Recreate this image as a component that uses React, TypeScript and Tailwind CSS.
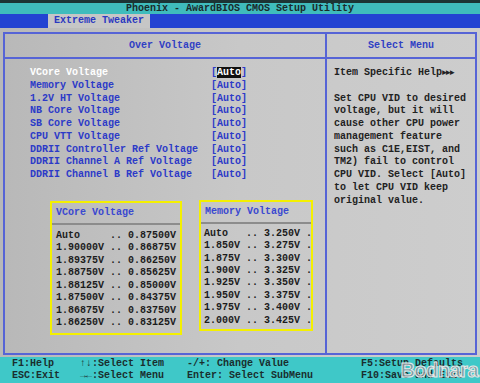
import React from "react";

const mono = { fontFamily: '"Liberation Mono", "DejaVu Sans Mono", monospace' };

const items = [
  "VCore Voltage",
  "Memory Voltage",
  "1.2V HT Voltage",
  "NB Core Voltage",
  "SB Core Voltage",
  "CPU VTT Voltage",
  "DDRII Controller Ref Voltage",
  "DDRII Channel A Ref Voltage",
  "DDRII Channel B Ref Voltage",
];

const help = [
  "Set CPU VID to desired",
  "voltage, but it will",
  "cause other CPU power",
  "management feature",
  "such as C1E,EIST, and",
  "TM2) fail to control",
  "CPU VID. Select [Auto]",
  "to let CPU VID keep",
  "original value.",
];

const vcore = [
  "Auto     .. 0.87500V",
  "1.90000V .. 0.86875V",
  "1.89375V .. 0.86250V",
  "1.88750V .. 0.85625V",
  "1.88125V .. 0.85000V",
  "1.87500V .. 0.84375V",
  "1.86875V .. 0.83750V",
  "1.86250V .. 0.83125V",
];

const mem = [
  "Auto   .. 3.250V .",
  "1.850V .. 3.275V .",
  "1.875V .. 3.300V .",
  "1.900V .. 3.325V .",
  "1.925V .. 3.350V .",
  "1.950V .. 3.375V .",
  "1.975V .. 3.400V .",
  "2.000V .. 3.425V .",
];

export default function App() {
  return (
    <div
      className="relative w-[480px] h-[383px] overflow-hidden flex flex-col text-[10px] font-bold"
      style={mono}
    >
      <div className="h-[3px] bg-[#1c3434]" />
      <div className="h-[11px] bg-[#3fbcbc] flex items-center justify-center text-[#1a2a2a] leading-[11px] whitespace-pre">
        Phoenix - AwardBIOS CMOS Setup Utility
      </div>
      <div className="h-[14px] bg-[#2343d2] flex items-end">
        <div className="ml-[48px] w-[102px] h-[14px] bg-[#c6c6c6] text-[#2a38c0] flex items-center justify-center leading-[14px]">
          Extreme Tweaker
        </div>
      </div>
      <div className="flex-1 bg-gradient-to-r from-[#b8b8b8] via-[#c8c8c8] to-[#cdcdcd] pt-[4px] px-[3px] pb-[2px] flex">
        <div className="flex-1 border-2 border-[#5664d6] flex">
          <div className="w-[322px] border-r-2 border-[#5664d6] flex flex-col">
            <div className="h-[25px] border-b-2 border-[#5664d6] flex items-center justify-center text-[#3040c4]">
              Over Voltage
            </div>
            <div className="pt-[8px] pl-[25px] flex flex-col leading-[12.75px]">
              {items.map((it, i) => (
                <div key={it} className="flex whitespace-pre">
                  <span className={`w-[181px] ${i === 0 ? "text-white" : "text-[#2c3ac8]"}`}>{it}</span>
                  <span className="text-[#2c3ac8]">
                    [
                    {i === 0 ? (
                      <span className="bg-[#101010] text-white">Auto</span>
                    ) : (
                      "Auto"
                    )}
                    ]
                  </span>
                </div>
              ))}
            </div>
            <div className="mt-[19px] flex items-start">
              <div className="ml-[45px] w-[132px] h-[134px] border-2 border-[#f4f000] flex flex-col">
                <div className="h-[22px] border-b-2 border-[#8c8c8c] pl-[4px] flex items-center text-[#3a48d0]">
                  VCore Voltage
                </div>
                <div className="pt-[5px] pl-[4px] flex flex-col leading-[12.5px] text-[#1c1c1c] whitespace-pre">
                  {vcore.map((r) => (
                    <div key={r}>{r}</div>
                  ))}
                </div>
              </div>
              <div className="ml-[17px] -mt-[1px] w-[114px] h-[131px] border-2 border-[#f4f000] flex flex-col overflow-hidden">
                <div className="h-[22px] border-b-2 border-[#8c8c8c] pl-[4px] flex items-center text-[#3a48d0]">
                  Memory Voltage
                </div>
                <div className="pt-[4px] pl-[3px] flex flex-col leading-[12.4px] text-[#1c1c1c] whitespace-pre">
                  {mem.map((r) => (
                    <div key={r}>{r}</div>
                  ))}
                </div>
              </div>
            </div>
          </div>
          <div className="flex-1 flex flex-col">
            <div className="h-[25px] border-b-2 border-[#5664d6] flex items-center justify-center text-[#3040c4]">
              Select Menu
            </div>
            <div className="pt-[8px] pl-[7px] flex flex-col leading-[12.75px] text-[#222222] whitespace-pre">
              <div>
                Item Specific Help<span className="text-[8px] tracking-[-1px]">►►►</span>
              </div>
              <div className="h-[12.75px]" />
              {help.map((h) => (
                <div key={h}>{h}</div>
              ))}
            </div>
          </div>
        </div>
      </div>
      <div className="h-[26px] bg-[#3fc8c8] text-[#1a2e2e] flex flex-col justify-center leading-[12.5px] whitespace-pre">
        <div className="flex">
          <span className="ml-[12px] w-[68px]">F1:Help</span>
          <span className="w-[107px]">↑↓:Select Item</span>
          <span className="w-[174px]">-/+: Change Value</span>
          <span>F5:Setup Defaults</span>
        </div>
        <div className="flex">
          <span className="ml-[12px] w-[68px]">ESC:Exit</span>
          <span className="w-[107px]">→←:Select Menu</span>
          <span className="w-[174px]">Enter: Select SubMenu</span>
          <span>F10:Save and Exit</span>
        </div>
      </div>
      <div
        className="absolute right-[2px] bottom-[-2px] text-[20px] font-extrabold text-[#8a9098]/80 tracking-[-0.5px]"
        style={{ fontFamily: '"Liberation Sans", Arial, sans-serif', WebkitTextStroke: "1px #e8e8e8" }}
      >
        Bodnara
      </div>
    </div>
  );
}
